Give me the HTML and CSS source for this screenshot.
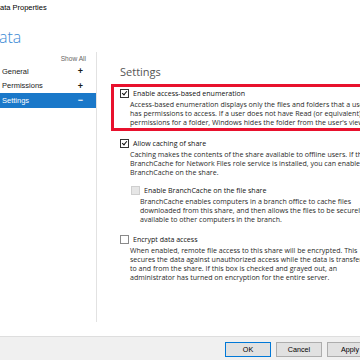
FILE: index.html
```html
<!DOCTYPE html>
<html lang="en">
<head>
    <meta charset="UTF-8">
    <meta name="viewport" content="width=device-width, initial-scale=1.0">
    <title>Data Properties</title>
    <link rel="stylesheet" href="styles.css">
</head>
<body>
    <div class="window">
        <div class="titlebar">ata Properties</div>
        <div class="header">ata</div>

        <div class="content">
            <div class="nav">
                <div class="show-all">Show All</div>
                <div class="nav-item"><span>General</span><span class="sign">+</span></div>
                <div class="nav-item"><span>Permissions</span><span class="sign">+</span></div>
                <div class="nav-item selected"><span>Settings</span><span class="sign">&minus;</span></div>
            </div>

            <div class="main">
                <div class="section-title">Settings</div>

                <div class="highlight">
                    <div class="option">
                        <span class="box checked"></span>
                        <span>Enable access-based enumeration</span>
                    </div>
                    <div class="desc">
                        Access-based enumeration displays only the files and folders that a user<br>
                        has permissions to access. If a user does not have Read (or equivalent)<br>
                        permissions for a folder, Windows hides the folder from the user's view.
                    </div>
                </div>

                <div class="group">
                    <div class="option">
                        <span class="box checked"></span>
                        <span>Allow caching of share</span>
                    </div>
                    <div class="desc">
                        Caching makes the contents of the share available to offline users. If the<br>
                        BranchCache for Network Files role service is installed, you can enable<br>
                        BranchCache on the share.
                    </div>
                </div>

                <div class="group sub">
                    <div class="option">
                        <span class="box disabled"></span>
                        <span>Enable BranchCache on the file share</span>
                    </div>
                    <div class="desc">
                        BranchCache enables computers in a branch office to cache files<br>
                        downloaded from this share, and then allows the files to be securely<br>
                        available to other computers in the branch.
                    </div>
                </div>

                <div class="group">
                    <div class="option">
                        <span class="box"></span>
                        <span>Encrypt data access</span>
                    </div>
                    <div class="desc">
                        When enabled, remote file access to this share will be encrypted. This<br>
                        secures the data against unauthorized access while the data is transferred<br>
                        to and from the share. If this box is checked and grayed out, an<br>
                        administrator has turned on encryption for the entire server.
                    </div>
                </div>
            </div>
        </div>

        <div class="footer">
            <button class="btn default">OK</button>
            <button class="btn">Cancel</button>
            <button class="btn">Apply</button>
        </div>
    </div>
</body>
</html>
```

FILE: styles.css
```css
body {
    margin: 0;
    font-family: "Liberation Sans", Arial, sans-serif;
    font-size: 7.2px;
    color: #1a1a1a;
    background: #fff;
    overflow: hidden;
}

.window {
    width: 360px;
    height: 360px;
    overflow: hidden;
    display: flex;
    flex-direction: column;
    white-space: nowrap;
}

.titlebar {
    height: 15px;
    line-height: 15px;
    font-size: 7.5px;
    color: #000;
}

.header {
    height: 37px;
    padding-top: 12px;
    box-sizing: border-box;
    font-family: "Open Sans", sans-serif;
    font-weight: 300;
    font-size: 16px;
    line-height: 20px;
    color: #3c8bd5;
    margin-left: -1px;
}

.content {
    display: flex;
    height: 284px;
}

.nav {
    width: 96px;
    flex-shrink: 0;
    border-right: 1px solid #e2e2e2;
    margin-bottom: 14px;
    padding-top: 1px;
}

.show-all {
    text-align: right;
    padding-right: 10px;
    font-size: 6.6px;
    color: #666;
    height: 11px;
    line-height: 11px;
}

.nav-item {
    display: flex;
    justify-content: space-between;
    align-items: center;
    height: 14.5px;
    padding: 0 13px 0 2px;
    font-size: 7.5px;
    color: #1a1a1a;
}

.nav-item .sign {
    font-weight: bold;
    font-size: 9px;
}

.nav-item.selected {
    background: #1a78c9;
    color: #fff;
}

.main {
    flex: 1;
    min-width: 0;
    padding-left: 14px;
    padding-top: 13px;
    font-family: "Open Sans", sans-serif;
    font-size: 7.05px;
}

.section-title {
    padding-left: 9px;
    font-size: 11px;
    line-height: 14px;
    color: #555;
    margin-bottom: 5px;
}

.highlight {
    border: 3px solid #e8112d;
    border-right: none;
    padding: 1px 0 1px 6px;
    margin-bottom: 7px;
}

.group {
    padding-left: 9px;
    margin-bottom: 8px;
}

.group.sub {
    padding-left: 20px;
    margin-bottom: 10px;
}

.option {
    display: flex;
    align-items: center;
    gap: 4px;
    height: 10px;
    color: #111;
}

.desc {
    margin-top: 2px;
    padding-left: 10px;
    line-height: 9px;
    color: #2a2a2a;
}

.group.sub .desc {
    padding-left: 9px;
}

.box {
    width: 7px;
    height: 7px;
    border: 1px solid #8a8a8a;
    background: #fff;
    position: relative;
    flex-shrink: 0;
}

.box.checked {
    border-color: #333;
}

.box.checked::after {
    content: "";
    position: absolute;
    left: 2px;
    top: 0px;
    width: 2px;
    height: 4px;
    border: solid #111;
    border-width: 0 1.3px 1.3px 0;
    transform: rotate(40deg);
}

.box.disabled {
    background: #e6e6e6;
    border-color: #cfcfcf;
}

.footer {
    flex: 1;
    background: #f0f0f0;
    border-top: 1px solid #dedede;
    display: flex;
    gap: 5px;
    padding: 5px 0 0 225px;
}

.btn {
    width: 46px;
    height: 15px;
    flex-shrink: 0;
    padding: 0;
    font-family: "Liberation Sans", Arial, sans-serif;
    font-size: 7.2px;
    color: #000;
    background: #e1e1e1;
    border: 1px solid #adadad;
    border-radius: 0;
}

.btn.default {
    border-color: #0078d7;
}
```
